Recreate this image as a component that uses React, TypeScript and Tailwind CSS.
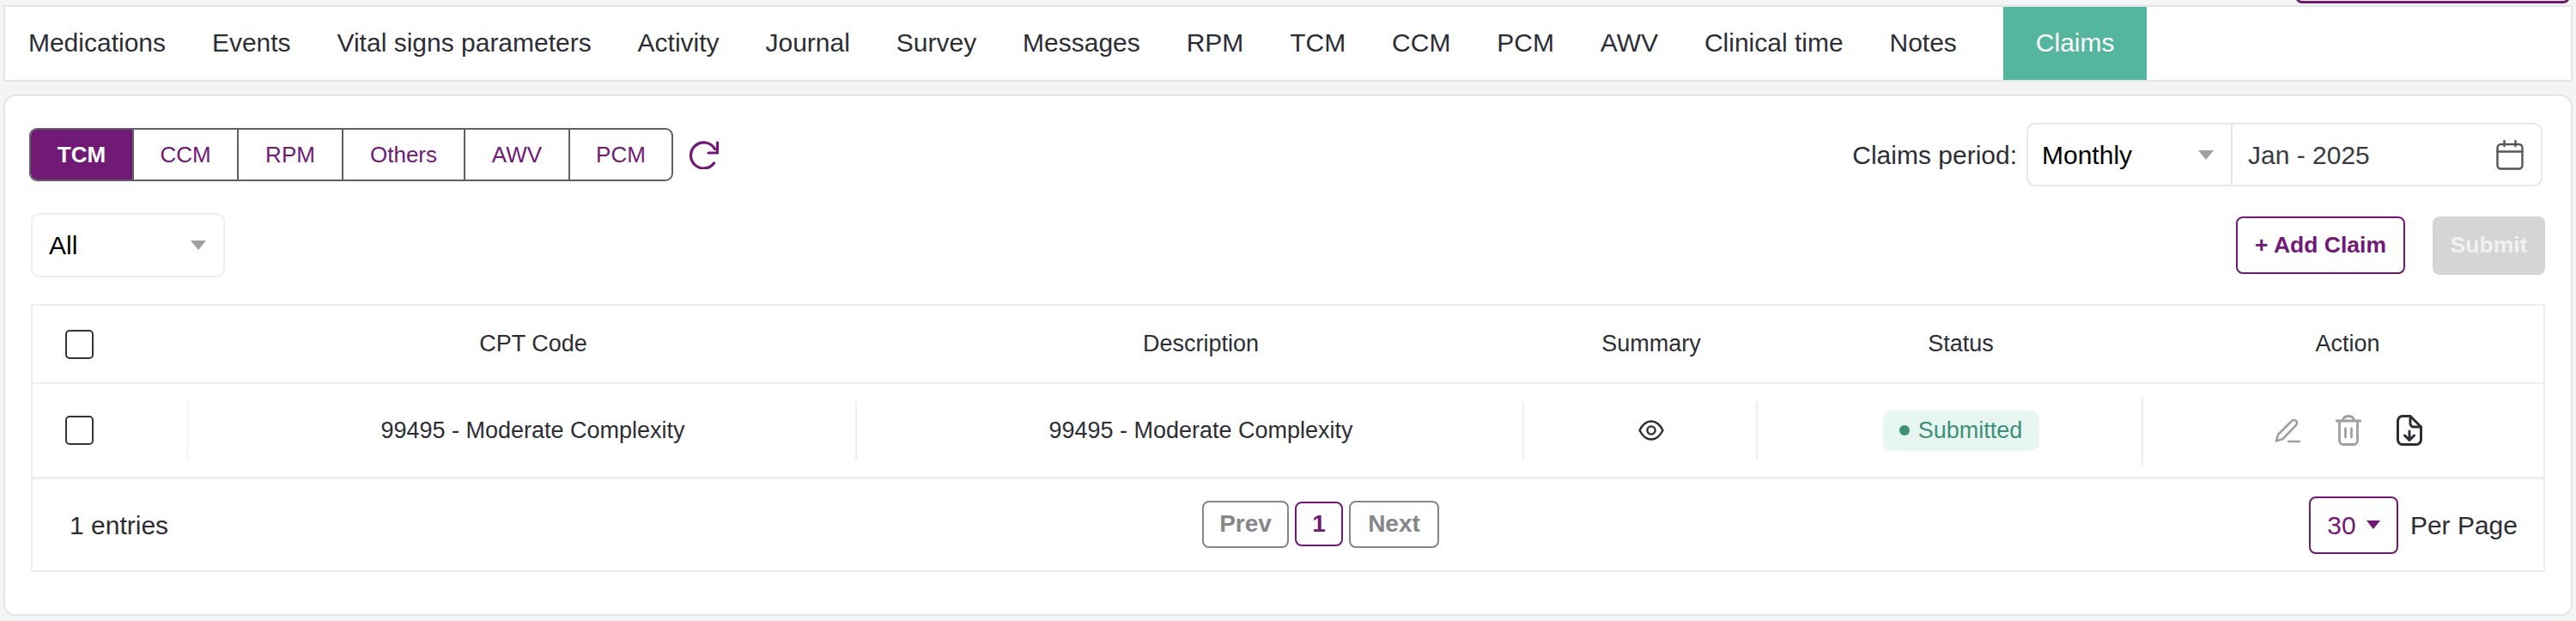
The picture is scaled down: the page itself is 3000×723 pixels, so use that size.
const tabs = ['Medications', 'Events', 'Vital signs parameters', 'Activity', 'Journal', 'Survey', 'Messages', 'RPM', 'TCM', 'CCM', 'PCM', 'AWV', 'Clinical time', 'Notes'];

const claimTypes = [
  { label: 'CCM', width: 'w-[122px]' },
  { label: 'RPM', width: 'w-[122px]' },
  { label: 'Others', width: 'w-[142px]' },
  { label: 'AWV', width: 'w-[122px]' },
  { label: 'PCM', width: 'w-[120px]' },
];

const rowGrid = 'grid grid-cols-[180px_778px_777px_272px_449px_1fr]';

function Caret({ className }: { className: string }) {
  return (
    <svg width="18" height="11" viewBox="0 0 18 11" className={className}>
      <polygon points="0,0 18,0 9,11" fill="currentColor" />
    </svg>
  );
}

function Checkbox() {
  return <div className="ml-[38px] h-[34px] w-[33px] rounded-[5px] border-2 border-[#33343a] bg-white" />;
}

function RefreshIcon() {
  return (
    <svg width="36" height="34" viewBox="0 0 36 34" fill="none" stroke="#701a75" strokeWidth="3.2" strokeLinecap="round" className="ml-[19px]">
      <path d="M29.5 10.5A15 15 0 1 0 28.5 27" />
      <path d="M32.5 3v12H22" />
    </svg>
  );
}

function CalendarIcon() {
  return (
    <svg width="32" height="35" viewBox="0 0 32 35" fill="none" stroke="#55565b" strokeWidth="2.4" strokeLinecap="round">
      <rect x="1.5" y="5" width="29" height="28.5" rx="4" />
      <path d="M1.5 13.5h29M9.5 1v6M22.5 1v6" />
    </svg>
  );
}

function EyeIcon() {
  return (
    <svg width="30" height="24" viewBox="0 0 30 24" fill="none" stroke="#2d2e35" strokeWidth="2.4">
      <path d="M1.5 12C5 5 9.5 1.5 15 1.5S25 5 28.5 12C25 19 20.5 22.5 15 22.5S5 19 1.5 12Z" />
      <circle cx="15" cy="12" r="4.6" />
    </svg>
  );
}

function PencilIcon() {
  return (
    <svg width="30" height="30" viewBox="0 0 30 30" fill="none" stroke="#a0a0a0" strokeWidth="2.6" strokeLinecap="round" strokeLinejoin="round">
      <path d="M2 27.5 4 20 20 4a3.5 3.5 0 0 1 5 5L9.5 25Z" />
      <path d="M16 28h13" />
    </svg>
  );
}

function TrashIcon() {
  return (
    <svg width="30" height="36" viewBox="0 0 30 36" fill="none" stroke="#a0a0a0" strokeWidth="2.8" strokeLinecap="round" strokeLinejoin="round">
      <path d="M1 7h28" />
      <path d="M8.5 6.5C9 3 11 1.5 15 1.5s6 1.5 6.5 5" />
      <path d="M4.5 7v23a4.5 4.5 0 0 0 4.5 4.5h12a4.5 4.5 0 0 0 4.5-4.5V7" />
      <path d="M11.5 16v10M18.5 16v10" />
    </svg>
  );
}

function FileDownIcon() {
  return (
    <svg width="30" height="36" viewBox="0 0 30 36" fill="none" stroke="#2d2e35" strokeWidth="3" strokeLinecap="round" strokeLinejoin="round">
      <path d="M16 1.5H7A5.5 5.5 0 0 0 1.5 7v22A5.5 5.5 0 0 0 7 34.5h16a5.5 5.5 0 0 0 5.5-5.5V14Z" />
      <path d="M16 1.5V10a4 4 0 0 0 4 4h8.5" />
      <path d="M15 19v10M9.5 24l5.5 5.5 5.5-5.5" />
    </svg>
  );
}

export default function App() {
  return (
    <div className="flex h-[723px] flex-col bg-[#f4f4f5] px-[4px] font-['Liberation_Sans',sans-serif] text-[#2d2e35]">
      {/* top button, only its lower edge is on screen */}
      <div className="flex h-[4px] items-end justify-end overflow-hidden pr-[3px]">
        <div className="h-[20px] w-[320px] shrink-0 rounded-[8px] border-[3px] border-[#701a75]" />
      </div>

      <div className="mt-[2px] flex h-[89px] items-stretch border-2 border-[#e2e6ea] bg-white text-[30px]">
        {tabs.map((tab) => (
          <div key={tab} className="flex items-center px-[26.95px] pb-[2px]">
            {tab}
          </div>
        ))}
        <div className="ml-[27px] flex items-center bg-[#55b6a0] px-[38px] pb-[2px] text-white">Claims</div>
      </div>

      <div className="mt-[15px] h-[607px] rounded-[14px] border-2 border-[#e2e6ea] bg-white px-[30px] pt-[31px]">
        <div className="flex h-[74px] items-center justify-between pr-[3px]">
          <div className="-ml-[2px] flex items-center">
            <div className="flex h-[62px] overflow-hidden rounded-[9px] border-2 border-[#5f6068] text-[26px] text-[#701a75]">
              <div className="flex w-[118px] items-center justify-center bg-[#701a75] font-bold text-white">TCM</div>
              {claimTypes.map((type) => (
                <div key={type.label} className={`flex items-center justify-center border-l-2 border-[#5f6068] ${type.width}`}>
                  {type.label}
                </div>
              ))}
            </div>
            <RefreshIcon />
          </div>

          <div className="flex items-center text-[30px]">
            <span className="mr-[11px]">Claims period:</span>
            <div className="flex h-[74px] w-[601px] rounded-[10px] border-2 border-[#e6e8eb]">
              <div className="flex w-[238px] items-center justify-between border-r-2 border-[#e2e6ea] pl-[16px] pr-[20px] text-black">
                Monthly
                <Caret className="text-[#a0a0a0]" />
              </div>
              <div className="flex flex-1 items-center justify-between pl-[18px] pr-[20px] text-[#3a3b40]">
                Jan - 2025
                <CalendarIcon />
              </div>
            </div>
          </div>
        </div>

        <div className="mt-[31px] flex items-center justify-between">
          <div className="flex h-[75px] w-[226px] items-center justify-between rounded-[10px] border-2 border-[#eeeeee] pl-[19px] pr-[20px] text-[30px] text-black">
            All
            <Caret className="text-[#a0a0a0]" />
          </div>
          <div className="flex items-center gap-[32px] text-[26.5px] font-bold">
            <div className="flex h-[67px] w-[197px] items-center justify-center rounded-[8px] border-2 border-[#701a75] text-[#701a75]">+ Add Claim</div>
            <div className="flex h-[68px] w-[131px] items-center justify-center rounded-[8px] bg-[#d4d5d7] text-[#f1f1f2]">Submit</div>
          </div>
        </div>

        <div className="mt-[31px] border-2 border-[#eeeeee] text-[27px]">
          <div className={`${rowGrid} h-[89px] items-center`}>
            <Checkbox />
            <div className="pl-[28px] text-center">CPT Code</div>
            <div className="pl-[28px] text-center">Description</div>
            <div className="pl-[28px] text-center">Summary</div>
            <div className="pl-[28px] text-center">Status</div>
            <div className="pl-[12px] text-center">Action</div>
          </div>

          <div className={`${rowGrid} h-[113px] items-center border-y-2 border-b-[3px] border-[#eeeeee]`}>
            <Checkbox />
            <div className="flex h-[67px] items-center justify-center border-l border-[#eeeeee] pl-[26px]">99495 - Moderate Complexity</div>
            <div className="flex h-[67px] items-center justify-center border-l-2 border-[#eeeeee] pl-[26px]">99495 - Moderate Complexity</div>
            <div className="flex h-[67px] items-center justify-center border-l-2 border-[#eeeeee] pl-[26px]">
              <EyeIcon />
            </div>
            <div className="flex h-[67px] items-center justify-center border-l-2 border-[#eeeeee] pl-[26px]">
              <div className="flex h-[47px] w-[182px] items-center justify-center gap-[10px] rounded-[10px] bg-[#e8f6f2] text-[#3d8f78]">
                <span className="h-[12px] w-[12px] rounded-full bg-[#3d8f78]" />
                Submitted
              </div>
            </div>
            <div className="flex h-[81px] items-center justify-center gap-[41px] border-l-2 border-[#eeeeee] pl-[12px]">
              <PencilIcon />
              <TrashIcon />
              <FileDownIcon />
            </div>
          </div>

          <div className="flex h-[106px] items-center pr-[30px] text-[30px]">
            <div className="w-[1362px] pl-[43px]">1 entries</div>
            <div className="mb-[2px] flex items-center gap-[7px] text-[28px] font-bold text-[#85868a]">
              <div className="flex h-[55px] w-[101px] items-center justify-center rounded-[8px] border-2 border-[#85868a]">Prev</div>
              <div className="flex h-[52px] w-[56px] items-center justify-center rounded-[8px] border-2 border-[#701a75] text-[#701a75]">1</div>
              <div className="flex h-[55px] w-[105px] items-center justify-center rounded-[8px] border-2 border-[#85868a]">Next</div>
            </div>
            <div className="ml-auto flex items-center gap-[14px]">
              <div className="flex h-[67px] w-[104px] items-center justify-center gap-[12px] rounded-[8px] border-2 border-[#701a75] text-[#701a75]">
                30
                <Caret className="h-[10px] w-[16px] text-[#701a75]" />
              </div>
              <span>Per Page</span>
            </div>
          </div>
        </div>
      </div>
    </div>
  );
}
